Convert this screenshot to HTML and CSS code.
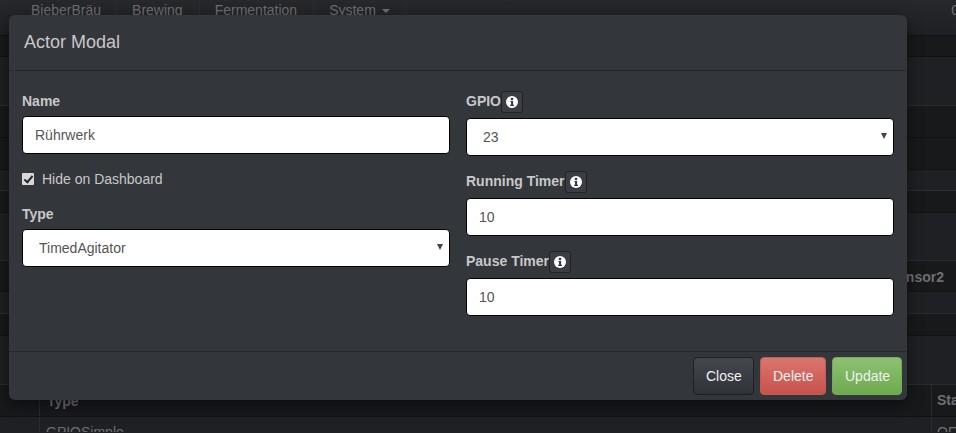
FILE: index.html
```html
<!DOCTYPE html>
<html lang="de">
<head>
    <meta charset="UTF-8">
    <meta name="viewport" content="width=device-width, initial-scale=1.0">
    <title>Actor Modal</title>
    <link rel="stylesheet" href="styles.css">
</head>
<body>
    <!-- Seite hinter dem Backdrop -->
    <div class="page">
        <nav class="navbar">
            <a class="nav-item">BieberBräu</a>
            <a class="nav-item">Brewing</a>
            <a class="nav-item">Fermentation</a>
            <a class="nav-item">System <span class="caret"></span></a>
            <span class="nav-right">0</span>
        </nav>
        <div class="band dark h20"></div>
        <div class="band h48"></div>
        <div class="band dark h31"></div>
        <div class="band dark h31"></div>
        <div class="band h20"></div>
        <div class="band dark h21"></div>
        <div class="band h47"></div>
        <div class="band dark band-text"><b>Sensor2</b></div>
        <div class="band h21"></div>
        <div class="band dark h21"></div>
        <div class="band h48"></div>
        <div class="band dark table-row head">
            <div class="cell-first"></div>
            <div class="cell-main"><b>Type</b></div>
            <div class="cell-last"><b>Status</b></div>
        </div>
        <div class="band table-row body-row">
            <div class="cell-first"></div>
            <div class="cell-main">GPIOSimple</div>
            <div class="cell-last">OFF</div>
        </div>
    </div>

    <div class="modal">
        <div class="modal-header">
            <h4>Actor Modal</h4>
        </div>
        <div class="modal-body">
            <div class="col">
                <div class="form-group">
                    <label class="label" for="name">Name</label>
                    <input class="form-control" type="text" id="name" value="Rührwerk">
                </div>
                <div class="form-group">
                    <label class="check"><input type="checkbox" checked> Hide on Dashboard</label>
                </div>
                <div class="form-group">
                    <label class="label" for="type">Type</label>
                    <div class="select-wrap">
                        <select class="form-control" id="type">
                            <option>TimedAgitator</option>
                        </select>
                    </div>
                </div>
            </div>
            <div class="col">
                <div class="form-group">
                    <label class="label" for="gpio">GPIO<button class="info" type="button"><svg viewBox="0 0 12 12"><circle cx="6" cy="6" r="6" fill="#fff"/><circle cx="6" cy="3" r="1.3" fill="#33363b"/><path d="M4.4 5h2.7v3.8h.9v1.1H4.2V8.800h.9V6.100h-.7z" fill="#33363b"/></svg></button></label>
                    <div class="select-wrap">
                        <select class="form-control" id="gpio">
                            <option>23</option>
                        </select>
                    </div>
                </div>
                <div class="form-group">
                    <label class="label" for="running">Running Timer<button class="info" type="button"><svg viewBox="0 0 12 12"><circle cx="6" cy="6" r="6" fill="#fff"/><circle cx="6" cy="3" r="1.3" fill="#33363b"/><path d="M4.4 5h2.7v3.8h.9v1.1H4.2V8.800h.9V6.100h-.7z" fill="#33363b"/></svg></button></label>
                    <input class="form-control" type="text" id="running" value="10">
                </div>
                <div class="form-group">
                    <label class="label" for="pause">Pause Timer<button class="info" type="button"><svg viewBox="0 0 12 12"><circle cx="6" cy="6" r="6" fill="#fff"/><circle cx="6" cy="3" r="1.3" fill="#33363b"/><path d="M4.4 5h2.7v3.8h.9v1.1H4.2V8.800h.9V6.100h-.7z" fill="#33363b"/></svg></button></label>
                    <input class="form-control" type="text" id="pause" value="10">
                </div>
            </div>
        </div>
        <div class="modal-footer">
            <button class="btn btn-default" type="button">Close</button>
            <button class="btn btn-danger" type="button">Delete</button>
            <button class="btn btn-success" type="button">Update</button>
        </div>
    </div>
</body>
</html>
```

FILE: styles.css
```css
/* Global */
html, body {
    margin: 0;
    padding: 0;
    height: 433px;
    overflow: hidden;
}

body {
    position: relative;
    font-family: "Liberation Sans", Arial, sans-serif;
    font-size: 14px;
    line-height: 20px;
    background: #1f2023;
    color: #6e6f71;
}

/* Seite hinter dem Modal */
.navbar {
    display: flex;
    height: 35px;
    padding-left: 16px;
    background: linear-gradient(to bottom, #26282b, #1f2023);
    border-bottom: 1px solid #111214;
    color: #6d6e70;
}

.nav-item {
    padding: 0 15px;
    border-right: 1px solid #2a2c30;
}

.nav-item + .nav-item {
    padding-right: 16px;
}

.caret {
    display: inline-block;
    margin-left: 2px;
    vertical-align: middle;
    border-top: 4px solid #6d6e70;
    border-left: 4px solid transparent;
    border-right: 4px solid transparent;
}

.nav-right {
    margin-left: auto;
    margin-right: -3px;
}

.band {
    background: #1f2023;
    border-bottom: 1px solid #2a2c2f;
}

.band.dark {
    background: #18191b;
    border-bottom: 1px solid #111214;
}

.h20 { height: 20px; }
.h21 { height: 21px; }
.h31 { height: 31px; }
.h47 { height: 47px; }
.h48 { height: 48px; }

.band-text {
    height: 24px;
    padding: 6px 12px 0 0;
    text-align: right;
}

.table-row {
    display: flex;
    overflow: hidden;
}

.table-row.head {
    height: 31px;
}

.table-row.body-row {
    height: 15px;
    border-bottom: 0;
}

.cell-first {
    width: 39px;
    border-right: 1px solid #2a2c2f;
}

.cell-main {
    flex: 1;
    padding: 5px 0 0 6px;
}

.head .cell-main {
    padding: 6px 0 0 7px;
}

.cell-last {
    width: 19px;
    overflow: hidden;
    white-space: nowrap;
    border-left: 1px solid #2a2c2f;
    padding: 5px 0 0 5px;
}

/* Modal */
.modal {
    position: absolute;
    top: 15px;
    left: 9px;
    width: 898px;
    background: #33363b;
    border-radius: 6px;
    box-shadow: 0 5px 15px rgba(0, 0, 0, 0.5);
    color: #c8c8c8;
}

.modal-header {
    height: 55px;
    border-bottom: 1px solid #26282c;
}

.modal-header h4 {
    margin: 0;
    padding: 17px 15px 0;
    font-size: 18px;
    line-height: 20px;
    font-weight: normal;
}

.modal-body {
    display: flex;
    gap: 16px;
    padding: 20px 13px;
}

.col {
    width: 428px;
}

.form-group {
    margin-bottom: 15px;
}

.label {
    display: flex;
    align-items: flex-start;
    margin-bottom: 5px;
    font-weight: bold;
}

.check {
    display: flex;
    align-items: center;
    height: 20px;
}

.check input {
    appearance: none;
    position: relative;
    width: 12px;
    height: 12px;
    margin: 0 8px 0 0;
    background: #d8d8d8;
    border-radius: 1px;
}

/* Haken der Checkbox */
.check input::after {
    content: "";
    position: absolute;
    top: 1px;
    left: 4px;
    width: 3px;
    height: 7px;
    border-right: 2px solid #26282c;
    border-bottom: 2px solid #26282c;
    transform: rotate(40deg);
}

.form-control {
    display: block;
    width: 100%;
    height: 38px;
    padding: 0 12px;
    box-sizing: border-box;
    border: 1px solid #000;
    border-radius: 4px;
    background: #fff;
    color: #555;
    font-family: inherit;
    font-size: 14px;
    outline: none;
}

select.form-control {
    appearance: none;
    padding-left: 16px;
}

.select-wrap {
    position: relative;
}

/* Pfeil des Select */
.select-wrap::after {
    content: "";
    position: absolute;
    top: 15px;
    right: 7px;
    border-top: 6px solid #444;
    border-left: 3px solid transparent;
    border-right: 3px solid transparent;
}

.info {
    display: inline-flex;
    align-items: center;
    justify-content: center;
    width: 22px;
    height: 22px;
    padding: 0;
    background: #3a3d43;
    border: 1px solid #1f2125;
    border-radius: 3px;
}

.info svg {
    width: 12px;
    height: 12px;
}

.modal-footer {
    display: flex;
    justify-content: flex-end;
    gap: 6px;
    padding: 5px;
    border-top: 1px solid #26282c;
}

.btn {
    height: 38px;
    padding: 0 12px;
    border-radius: 4px;
    font-family: inherit;
    font-size: 14px;
    color: #f0f0f0;
    border: 1px solid transparent;
}

.btn-default {
    width: 61px;
    background: linear-gradient(to bottom, #44474e, #2f3237);
    border-color: #1e2024;
}

.btn-danger {
    width: 66px;
    background: linear-gradient(to bottom, #d9766f, #c8524b);
    border-color: #c45a54;
}

.btn-success {
    width: 70px;
    background: linear-gradient(to bottom, #8cc172, #6eaa4e);
    border-color: #74ad56;
}
```
